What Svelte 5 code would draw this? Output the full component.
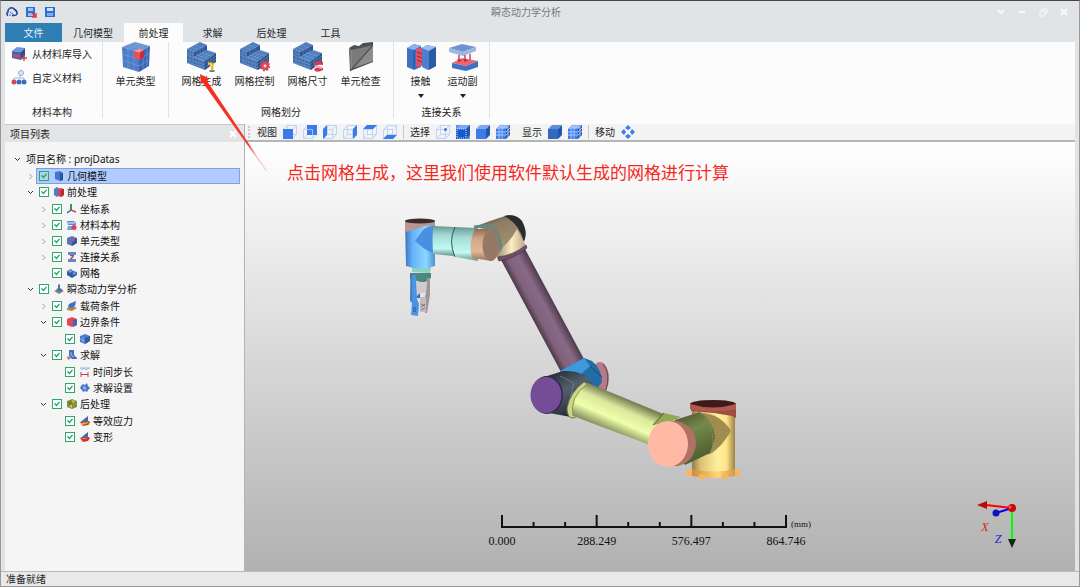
<script lang="ts">
  type TreeNode = {
    label: string;
    icon?: string;
    open?: boolean;
    folded?: boolean;
    children?: TreeNode[];
  };

  const tabs = ['几何模型', '前处理', '求解', '后处理', '工具'];
  const meshTools = [
    { label: '网格生成', icon: 'mesh-run' },
    { label: '网格控制', icon: 'mesh-control' },
    { label: '网格尺寸', icon: 'mesh-size' },
    { label: '单元检查', icon: 'check' },
  ];
  const linkTools = [
    { label: '接触', icon: 'contact' },
    { label: '运动副', icon: 'joint' },
  ];
  const toolbar = [
    {
      label: '视图',
      items: ['front', 'back', 'left', 'right', 'top', 'bottom'],
      split: true,
    },
    { label: '选择', items: ['point', 'edge', 'solid', 'grid'] },
    { label: '显示', items: ['shaded', 'meshed'], split: true },
    { label: '移动', items: ['move'] },
  ];

  const project: TreeNode = {
    label: '项目名称 : projDatas',
    open: true,
    children: [
      { label: '几何模型', icon: 'geometry', folded: true },
      {
        label: '前处理',
        icon: 'pre',
        open: true,
        children: [
          { label: '坐标系', icon: 'axes', folded: true },
          { label: '材料本构', icon: 'material', folded: true },
          { label: '单元类型', icon: 'element', folded: true },
          { label: '连接关系', icon: 'link', folded: true },
          { label: '网格', icon: 'mesh' },
        ],
      },
      {
        label: '瞬态动力学分析',
        icon: 'dynamic',
        open: true,
        children: [
          { label: '载荷条件', icon: 'load', folded: true },
          {
            label: '边界条件',
            icon: 'boundary',
            open: true,
            children: [{ label: '固定', icon: 'fixed' }],
          },
          {
            label: '求解',
            icon: 'solve',
            open: true,
            children: [
              { label: '时间步长', icon: 'step' },
              { label: '求解设置', icon: 'setting' },
            ],
          },
          {
            label: '后处理',
            icon: 'post',
            open: true,
            children: [
              { label: '等效应力', icon: 'stress' },
              { label: '变形', icon: 'deform' },
            ],
          },
        ],
      },
    ],
  };

  const ticks = Array.from({ length: 10 }, (_, i) => ({
    x: 502 + (i * 284) / 9,
    major: i % 3 === 0,
  }));
  const tickLabels = ['0.000', '288.249', '576.497', '864.746'];

  let activeTab = $state('前处理');
  let selected = $state('几何模型');
</script>

{#snippet meshBlock()}
  <path d="M0 7 7 10V15L18 19V28L0 21Z" fill="#3f6cab" />
  <path d="M0 7 13 0 20 3 7 10Z" fill="#4f7fbf" />
  <path d="M7 10 20 3V8L7 15Z" fill="#2d5490" />
  <path d="M7 15 20 8 29 11 18 19Z" fill="#4c7cbd" />
  <path d="M18 19 29 11V20L18 28Z" fill="#264b85" />
  <path
    d="M3 8V22M6 10V23M9 16V24M12 17V26M15 18V27M0 10 7 13M0 13 18 20M0 17 18 23M0 20 18 26M4 5 11 8M8 3 15 6M11 17 24 9M14 18 27 10M10 13 22 17M14 11 25 14M10 9V13M13 7V12M16 5V10M18 22 29 14M18 25 29 17M21 17V26M24 15V24M27 13V22"
    fill="none" stroke="#8db4e2" stroke-width=".5" opacity=".7"
  />
{/snippet}

{#snippet ribbonIcon(name: string)}
  <svg class="big-icon" viewBox="0 0 30 30" aria-hidden="true">
    {#if name.startsWith('mesh')}
      {@render meshBlock()}
      {#if name === 'mesh-run'}
        <ellipse cx="25" cy="29" rx="3" ry="1" fill="#666" />
        <path d="M21 20 27 21 26 28 24 29 24 24 21 23Z" fill="#e7b42b" />
        <path d="M23 21 25 24" stroke="#fff1a8" />
      {:else if name === 'mesh-control'}
        <circle cx="25" cy="24" r="4" fill="#e0495d" />
        <circle cx="25" cy="24" r="4.4" fill="none" stroke="#d93e53" stroke-width="1.6" stroke-dasharray="2 1.4" />
        <circle cx="25" cy="24" r="1.4" fill="#ffd6da" />
      {:else}
        <path d="M21 21Q25 18 30 20V23Q25 22 21 24ZM21 27Q25 24 30 26V28Q25 31 22 29Z" fill="#d83b50" />
        <path d="M22 24 29 26" stroke="#f6aab2" stroke-width="2" />
      {/if}
    {:else if name === 'cube'}
      <path d="M1 5 14 0 29 4 18 10Z" fill="#6790d0" />
      <path d="M1 5 18 10V30L2 25Z" fill="#4d7cc8" />
      <path d="M18 10 29 4 28 24 18 30Z" fill="#3a66b2" />
      <path
        d="M6 3 24 7M10 1 28 5M7 7 20 1M13 9 25 3M7 7V27M13 9V28M1 12 18 17 29 11M1 18 18 24 29 17M22 8V27M26 6V25"
        fill="none" stroke="#86a9e0" stroke-width=".5"
      />
      <path d="M13 9 18 7 23 8 18 11Z" fill="#ff9090" />
      <path d="M13 9 19 11V18L13 16Z" fill="#ef4b59" />
      <path d="M19 11 23 8V15L19 18Z" fill="#c32e43" />
    {:else if name === 'check'}
      <path d="M3 6 8 3 13 4 17 1 27 0V20L17 24 4 29Z" fill="#4f4f4f" />
      <path d="M5 8 15 6 27 3V19L16 23 5 27Z" fill="#7b7b7b" />
      <path d="M27 4V19L10 25Z" fill="#8c8c8c" />
      <path d="M27 3 4 29" stroke="#3c3c3c" />
      <path d="M3 6 5 9V27" fill="none" stroke="#999" />
    {:else if name === 'contact'}
      <path d="M1 6 8 2 15 4V25L8 28 1 25Z" fill="#3e71c1" />
      <path d="M1 6 8 2 15 4 8 8Z" fill="#8bb4ee" />
      <path d="M8 8V27" stroke="#274f93" />
      <path d="M10 7 19 5V23L10 25Z" fill="#e25065" />
      <path d="M11 10 16 12M11 14 16 16M11 18 16 20" stroke="#8e2845" />
      <path d="M16 6 21 3 30 5V24L22 28 16 25Z" fill="#4c7fcd" />
      <path d="M16 6 21 3 30 5 23 9Z" fill="#9abdf0" />
      <path d="M23 9 30 5V24L23 28Z" fill="#2c5aa5" />
    {:else}
      <path d="M1 6 14 2 28 5 15 10Z" fill="#7094d2" />
      <path d="M1 6 15 10V14L1 10ZM15 10 28 5V9L15 14Z" fill="#9cb6dd" />
      <path d="M4 21 14 16 30 19 18 24Z" fill="#f1626c" />
      <path d="M4 21 18 24V29L4 26ZM18 24 30 19V25L18 29Z" fill="#3d71c3" />
      <path d="M11 13V18M17 13V19M22 12V18" stroke="#c34658" stroke-width="1.5" />
      <path d="M9 17 14 18 11 20ZM15 17 20 18 17 20Z" fill="#b92a3e" />
    {/if}
  </svg>
{/snippet}

{#snippet viewIcon(name: string)}
  <svg width="14" height="14" viewBox="0 0 14 14" aria-hidden="true">
    {#if name === 'move'}
      <path d="M7 0 10 3 7 5 4 3ZM7 14 10 11 7 9 4 11ZM0 7 3 4 5 7 3 10ZM14 7 11 4 9 7 11 10Z" fill="#3c7dea" />
    {:else if ['edge', 'solid', 'grid', 'shaded', 'meshed'].includes(name)}
      {#if name === 'edge'}
        <path d="M0 0H14V14H0Z" fill="#5a94f0" />
      {/if}
      <path d="M0 4 4 0H14L10 4Z" fill={name === 'shaded' ? '#5b8ede' : '#79a8f5'} />
      <path d="M0 4H10V14H0Z" fill={name === 'shaded' ? '#3469c0' : name === 'edge' ? '#155bd0' : '#3b7ce9'} />
      <path d="M10 4 14 0V10L10 14Z" fill="#2456ad" />
      {#if name === 'edge'}
        <path d="M1 4H10V13H1Z" fill="none" stroke="#cfe0ff" stroke-dasharray="1 1" />
      {:else if name === 'grid' || name === 'meshed'}
        <path d="M0 7H10L14 3M0 10H10L14 6M3 4V14M6 4V14M3 4 7 0M6 4 10 0M2 2H12M12 2V12" fill="none" stroke="#c3d9ff" stroke-width=".8" />
      {/if}
    {:else}
      <path d="M.5 4.5H9.5V13.5H.5ZM4.5.5H13.5V9.5H4.5ZM.5 4.5 4.5.5M9.5 4.5 13.5.5M.5 13.5 4.5 9.5M9.5 13.5 13.5 9.5" fill="none" stroke="#bcd5fb" />
      {#if name === 'front'}
        <path d="M0 4H10V14H0Z" fill="#3a7be9" />
      {:else if name === 'back'}
        <path d="M4 0H14V10H4Z" fill="#3a7be9" />
        <path d="M4 4.5H9.5V10" fill="none" stroke="#9dc1fa" />
      {:else if name === 'left'}
        <path d="M0 4 4 0V10L0 14Z" fill="#3a7be9" />
      {:else if name === 'right'}
        <path d="M10 4 14 0V10L10 14Z" fill="#3a7be9" />
      {:else if name === 'top'}
        <path d="M0 4 4 0H14L10 4Z" fill="#3a7be9" />
      {:else if name === 'bottom'}
        <path d="M0 14 4 10H14L10 14Z" fill="#3a7be9" />
      {:else}
        <circle cx="9.5" cy="4.5" r="1.6" fill="#3a7be9" />
      {/if}
    {/if}
  </svg>
{/snippet}

{#snippet treeIcon(name: string)}
  <svg class="node-icon" viewBox="0 0 10 10" aria-hidden="true">
    {#if name === 'geometry'}
      <path d="M1 1 6 0 9 2V9L6 10 1 8Z" fill="#3d79cf" />
      <path d="M6 2 9 2V9L6 10Z" fill="#285599" />
    {:else if name === 'pre'}
      <path d="M0 2 3 0 6 2V8L3 10 0 8Z" fill="#4f7fc6" />
      <path d="M4 2 7 1 10 2V8L7 10 4 9Z" fill="#d9404f" />
      <path d="M7 3 10 2V8L7 10Z" fill="#a82c40" />
    {:else if name === 'axes'}
      <path d="M4 6 9 8" stroke="#c94a55" stroke-width="1.5" />
      <path d="M4 0V6" stroke="#2f9a57" stroke-width="2" />
      <path d="M4 6 0 9" stroke="#3562b5" stroke-width="1.5" />
    {:else if name === 'material'}
      <path d="M0 1H7L9 3V5H1Z" fill="#5a8ad2" />
      <path d="M1 3H8" stroke="#e8efff" />
      <path d="M1 6H5V10H0Z" fill="#7da0dc" />
      <circle cx="7" cy="7.5" r="2.5" fill="#dc3f55" />
    {:else if name === 'element' || name === 'fixed'}
      <path d="M0 2 5 0 10 2V7L5 10 0 8Z" fill="#4b7ccb" />
      <path d="M5 4 10 2V7L5 10Z" fill="#3059a5" />
      {#if name === 'element'}
        <path d="M4 3 7 2 8 4 6 6 4 5Z" fill="#e14455" />
      {:else}
        <path d="M3 3V8M0 5 5 7" stroke="#a5c3f0" stroke-width=".6" />
      {/if}
    {:else if name === 'link'}
      <path d="M1 0H9V3H1ZM1 7H9V10H1Z" fill="#6289c9" />
      <path d="M3 3H7V4L5 7H3L5 4H3Z" fill="#d23e50" />
    {:else if name === 'mesh'}
      <path d="M0 3 4 1 6 3 10 4V7L5 10 0 7Z" fill="#2f5c9f" />
      <path d="M0 3 4 1 6 3 3 5ZM5 5 8 4 10 5 7 7Z" fill="#6f9bd6" />
    {:else if name === 'dynamic'}
      <path d="M0 7 5 5 10 7 5 10Z" fill="#8f8567" />
      <path d="M4 1 6 0V4L9 6 6 8 2 6 4 4Z" fill="#4672b8" />
    {:else if name === 'load'}
      <path d="M0 7 6 5 10 7 5 10 0 9Z" fill="#b0894a" />
      <path d="M2 3 9 0 8 5 4 7 1 6Z" fill="#3c70c2" />
    {:else if name === 'boundary'}
      <path d="M0 2 5 0 10 2V8L5 10 0 8Z" fill="#e44654" />
      <path d="M6 3 10 2V8L6 10Z" fill="#3c68b6" />
    {:else if name === 'solve'}
      <path d="M2 0H7V5L10 8V9H5L2 6Z" fill="#3f6fbe" />
      <path d="M0 6 4 8 1 10Z" fill="#cc5568" />
      <path d="M4 2V5L7 7" fill="none" stroke="#a6c1ea" />
    {:else if name === 'step'}
      <path d="M0 1H10M1 3 4 1 6 3 9 1" fill="none" stroke="#86a7dc" stroke-width=".8" />
      <path d="M1 5V10M1 7.5H8M8 5V10" fill="none" stroke="#cf3f4f" />
    {:else if name === 'setting'}
      <path d="M1 3 3 1 5 2 7 0 8 3 10 5 8 7 7 9 5 8 3 9 2 7 0 5Z" fill="#4777c5" />
      <path d="M3 3 6 4V7L3 6Z" fill="#8db2ea" />
    {:else if name === 'post'}
      <path d="M0 2 5 0 10 2V8L5 10 0 8Z" fill="#5da443" />
      <circle cx="3" cy="4" r="1.5" fill="#df3b2d" />
      <circle cx="7" cy="6" r="1.8" fill="#e56a2c" />
      <path d="M2 7 5 6 5 9ZM5 1 8 2 6 4Z" fill="#f0c93b" />
    {:else}
      <path d="M0 6 7 4 10 6 8 9 3 10Z" fill="#d2302e" />
      <path d="M3 4 8 0V4L5 6 1 6Z" fill="#3e69ae" />
      {#if name === 'stress'}
        <path d="M1 7 8 6V7L3 9Z" fill="#efb23a" />
        <path d="M7 7 10 6 9 9Z" fill="#4fa34d" />
      {:else}
        <path d="M1 6 8 6 4 7Z" fill="#f2a53c" />
      {/if}
    {/if}
  </svg>
{/snippet}

{#snippet treeNode(node: TreeNode)}
  <li>
    <div class="row">
      <span class="twist">
        {#if node.open || node.folded}
          <button type="button" aria-label={`展开 ${node.label}`} aria-expanded={!!node.open}>
            <svg width="7" height="7" viewBox="0 0 7 7" aria-hidden="true">
              <path
                d={node.open ? 'M1 2 3.5 4.500 6 2' : 'M2.5 1 5 3.500 2.500 6'}
                fill="none" stroke={node.open ? '#333' : '#999'}
              />
            </svg>
          </button>
        {/if}
      </span>
      {#if node.icon}
        <div class="item" class:selected={selected === node.label}>
          <input type="checkbox" id={`node-${node.icon}`} checked />
          <label for={`node-${node.icon}`}>
            {@render treeIcon(node.icon)}
            {node.label}
          </label>
        </div>
      {:else}
        <span class="root-label">{node.label}</span>
      {/if}
    </div>
    {#if node.children}
      <ul>
        {#each node.children as child (child.label)}
          {@render treeNode(child)}
        {/each}
      </ul>
    {/if}
  </li>
{/snippet}

<div class="window">
  <header class="titlebar">
    <div class="quick">
      <button type="button" aria-label="云端">
        <svg width="12" height="12" viewBox="0 0 12 12" aria-hidden="true">
          <path d="M2 9.500A2 2 0 0 1 2 6 3.500 3.500 0 0 1 8 3Q11.500 5 11 8 10 10 6 9.500" fill="none" stroke="#22379a" stroke-width="1.500" />
          <path d="M1 6Q2 2 6 2" fill="none" stroke="#4c8ae0" stroke-dasharray="2 1" />
          <path d="M4 6 8 9M5 9H3" stroke="#3b6fd2" />
        </svg>
      </button>
      <button type="button" aria-label="另存为">
        <svg width="12" height="12" viewBox="0 0 12 12" aria-hidden="true">
          <path d="M1 1H10V11H1Z" fill="#2d6fd6" />
          <path d="M3 2H8V5H3ZM3 7H8V10H3Z" fill="#9cc1f5" />
          <path d="M6 6 10 10M11 7V11H7" fill="none" stroke="#e03b45" stroke-width="1.500" />
        </svg>
      </button>
      <button type="button" aria-label="保存">
        <svg width="12" height="12" viewBox="0 0 12 12" aria-hidden="true">
          <path d="M1 1H11V11H1Z" fill="#2d6fd6" />
          <path d="M3 2H9V5H3Z" fill="#cfe1fb" />
          <path d="M3 7H9V10H3Z" fill="#7eacf0" />
        </svg>
      </button>
    </div>
    <h1>瞬态动力学分析</h1>
    <div class="controls">
      <button type="button" aria-label="功能区">
        <svg width="10" height="10" viewBox="0 0 10 10"><path d="M2 3 5 6 8 3" /></svg>
      </button>
      <button type="button" aria-label="最小化">
        <svg width="10" height="10" viewBox="0 0 10 10"><path d="M2 5H8" /></svg>
      </button>
      <button type="button" aria-label="还原">
        <svg class="thin" width="10" height="10" viewBox="0 0 10 10"><path d="M2 4H7V9H2ZM4 4V2H9V6H7" /></svg>
      </button>
      <button type="button" aria-label="关闭">
        <svg width="10" height="10" viewBox="0 0 10 10"><path d="M2 2 8 8M8 2 2 8" /></svg>
      </button>
    </div>
  </header>

  <nav class="tabs">
    <button type="button" class="file">文件</button>
    {#each tabs as tab (tab)}
      <button type="button" class:active={activeTab === tab} onclick={() => (activeTab = tab)}>{tab}</button>
    {/each}
  </nav>

  <section class="ribbon">
    <div class="group material">
      <div class="stack">
        <button type="button" class="line-btn">
          <svg width="16" height="16" viewBox="0 0 16 16" aria-hidden="true">
            <path d="M1 5 6 1 14 2 10 6Z" fill="#6b98de" />
            <path d="M1 5 10 6V14L1 12Z" fill="#3969b8" />
            <path d="M10 6 14 2V10L10 14Z" fill="#284e91" />
            <path d="M2 8 9 9V12L2 11Z" fill="#d4475b" />
            <path d="M13 9V15M10 12H16" stroke="#e03d4c" stroke-width="1.500" />
          </svg>
          从材料库导入
        </button>
        <button type="button" class="line-btn">
          <svg width="16" height="16" viewBox="0 0 16 16" aria-hidden="true">
            <path d="M9 4V8M3 12V8H13V12" fill="none" stroke="#a3b8da" />
            <circle cx="10" cy="3" r="2.500" fill="#d9e6fa" stroke="#8daee0" />
            <circle cx="3" cy="12" r="2.500" fill="#d2475a" />
            <circle cx="8" cy="12" r="2.500" fill="#3c6dc0" />
            <circle cx="13" cy="12" r="2.500" fill="#3c6dc0" />
          </svg>
          自定义材料
        </button>
      </div>
      <div class="caption">材料本构</div>
    </div>

    <div class="group element">
      <div class="tools">
        <button type="button" class="tool">
          {@render ribbonIcon('cube')}
          <span>单元类型</span>
        </button>
      </div>
    </div>

    <div class="group mesh">
      <div class="tools">
        {#each meshTools as tool (tool.icon)}
          <button type="button" class="tool">
            {@render ribbonIcon(tool.icon)}
            <span>{tool.label}</span>
          </button>
        {/each}
      </div>
      <div class="caption">网格划分</div>
    </div>

    <div class="group link">
      <div class="tools">
        {#each linkTools as tool (tool.icon)}
          <button type="button" class="tool narrow">
            {@render ribbonIcon(tool.icon)}
            <span>{tool.label}</span>
            <i class="drop"></i>
          </button>
        {/each}
      </div>
      <div class="caption">连接关系</div>
    </div>
  </section>

  <main>
    <aside>
      <div class="dock-head">
        <h2>项目列表</h2>
        <button type="button" aria-label="关闭面板">
          <svg width="10" height="10" viewBox="0 0 10 10"><path d="M2 2 8 8M8 2 2 8" stroke="#fff" stroke-width="2" /></svg>
        </button>
      </div>
      <ul class="tree">
        {@render treeNode(project)}
      </ul>
    </aside>

    <div class="work">
      <div class="viewbar">
        <span class="grip"></span>
        {#each toolbar as section (section.label)}
          <div class="view-section" class:split={section.split}>
            <span>{section.label}</span>
            {#each section.items as item (item)}
              <button type="button" aria-label={`${section.label} ${item}`}>{@render viewIcon(item)}</button>
            {/each}
          </div>
        {/each}
      </div>

      <div class="viewport">
        <svg class="scene" viewBox="245 142 830 429" role="img" aria-label="机械臂模型">
          <defs>
            <linearGradient id="wrist"><stop offset="0" stop-color="#3c74bd" /><stop offset=".25" stop-color="#65b2fb" /><stop offset=".7" stop-color="#8cd8ff" /><stop offset="1" stop-color="#4c93cb" /></linearGradient>
            <linearGradient id="aqua" x2="0" y2="1"><stop offset="0" stop-color="#699895" /><stop offset=".3" stop-color="#a3dad5" /><stop offset=".75" stop-color="#c2faf3" /><stop offset="1" stop-color="#68928e" /></linearGradient>
            <linearGradient id="tan" x2="0" y2="1"><stop offset="0" stop-color="#8e6c56" /><stop offset=".3" stop-color="#d3a688" /><stop offset=".7" stop-color="#e3b797" /><stop offset="1" stop-color="#95735b" /></linearGradient>
            <linearGradient id="elbow" x2=".4" y2="1"><stop offset="0" stop-color="#30302b" /><stop offset=".3" stop-color="#8d7c61" /><stop offset="1" stop-color="#ab9877" /></linearGradient>
            <linearGradient id="cream"><stop offset="0" stop-color="#9d8f72" /><stop offset=".5" stop-color="#ffebc3" /><stop offset="1" stop-color="#b7a684" /></linearGradient>
            <linearGradient id="upper" gradientUnits="userSpaceOnUse" x1="529" y1="317" x2="555" y2="303"><stop offset="0" stop-color="#3b2b38" /><stop offset=".3" stop-color="#80627c" /><stop offset=".65" stop-color="#896a85" /><stop offset="1" stop-color="#49364a" /></linearGradient>
            <linearGradient id="fore" gradientUnits="userSpaceOnUse" x1="625" y1="399" x2="611" y2="431"><stop offset="0" stop-color="#788153" /><stop offset=".3" stop-color="#dce89c" /><stop offset=".65" stop-color="#efffab" /><stop offset="1" stop-color="#899462" /></linearGradient>
            <linearGradient id="olive" x2=".4" y2="1"><stop offset="0" stop-color="#3e4b27" /><stop offset=".45" stop-color="#75894a" /><stop offset="1" stop-color="#4d5e32" /></linearGradient>
            <linearGradient id="base"><stop offset="0" stop-color="#907d4a" /><stop offset=".2" stop-color="#dcc176" /><stop offset=".6" stop-color="#fff09c" /><stop offset=".8" stop-color="#ffe487" /><stop offset="1" stop-color="#9b8247" /></linearGradient>
            <linearGradient id="foot"><stop offset="0" stop-color="#d18b38" /><stop offset=".6" stop-color="#ffd77a" /><stop offset="1" stop-color="#d9964a" /></linearGradient>
            <linearGradient id="slate" x2=".5" y2="1"><stop offset="0" stop-color="#1c2127" /><stop offset=".5" stop-color="#52606e" /><stop offset="1" stop-color="#232a32" /></linearGradient>
          </defs>

          <!-- gripper -->
          <path d="M412 267H431L430 273 412 272Z" fill="#8ed1c2" />
          <path d="M410 273H431V278L424 283 410 279Z" fill="#4c887d" />
          <path d="M417 282H426V293H420L417 296Z" fill="#d3cace" />
          <path d="M427 278H430V295L427 313H425V296L426 293Z" fill="#9e969c" />
          <path d="M420 297H426V312H420Z" fill="#c4bdc0" />
          <path d="M421 304 425 306M421 310 425 308M425 304 421 307" stroke="#7d787b" />
          <path d="M411 275H416L417 299 419 304 418 316 411 315 412 303 410 301Z" fill="#4a94e3" />
          <path d="M411 275V300" stroke="#2f69ad" />
          <path d="M413 307H416V312H413Z" fill="#3674bd" />
          <path d="M417 296 420 293V298H417Z" fill="#356fb6" />

          <!-- wrist -->
          <path d="M405 221H435V266Q420 271 406 266Z" fill="url(#wrist)" />
          <path d="M405 221V232Q418 229 424 226L435 225V221Z" fill="#b99692" />
          <ellipse cx="420" cy="221" rx="15" ry="2.500" fill="#3c2b2b" />
          <path d="M415 241 423 230Q427 226 435 226V254Q425 250 421 246Z" fill="#4b90df" />
          <path d="M433 226 454 227V256L433 254Q432 240 433 226Z" fill="url(#aqua)" />
          <path d="M454 227 478 228V261L456 257Q448 242 454 227Z" fill="url(#aqua)" />
          <path d="M455 227Q448 241 455 257" fill="none" stroke="#315b59" />

          <!-- elbow -->
          <path d="M474 227 490 221 508 215Q524 216 526 235L520 249 498 261 490 230Z" fill="url(#elbow)" />
          <path d="M504 216Q516 213 522 221 528 232 524 242 519 223 504 216Z" fill="#292d2d" />
          <path d="M474 227 490 225Q501 232 501 253" fill="none" stroke="#618984" stroke-width="3" />
          <path d="M517 229Q512 239 503 247L497 258Q512 257 526 246Z" fill="url(#cream)" />
          <path d="M475 229 492 229V261L472 258Q468 243 475 229Z" fill="url(#tan)" />
          <ellipse cx="491" cy="245" rx="8.500" ry="16" fill="#957966" />

          <!-- upper arm -->
          <path d="M501 260 525 249 584 359Q577 368 561 372Z" fill="url(#upper)" />
          <path d="M498 257Q514 255 526 245L527 248Q514 259 499 261Z" fill="#6d5068" stroke="#432f42" stroke-width=".6" />

          <!-- middle joint -->
          <ellipse cx="600" cy="378" rx="9" ry="16" fill="#b47c89" />
          <path d="M603 364Q611 373 606 390" fill="none" stroke="#654149" />
          <path d="M560 371 584 358 592 361Q602 369 602 382L594 393 572 384Z" fill="#236ca6" />
          <path d="M560 371 584 358 590 366 579 376Z" fill="#3f97dc" />
          <path d="M590 366 602 377" stroke="#174a76" />
          <path d="M544 377 563 371Q584 370 592 383L586 398 571 417 549 413Z" fill="url(#slate)" />
          <path d="M560 376 574 383 567 411" fill="none" stroke="#6c7986" />
          <ellipse cx="547" cy="395" rx="16" ry="19" fill="#38234b" />
          <ellipse cx="546" cy="395" rx="15.500" ry="18" fill="#744d96" />

          <!-- forearm -->
          <path d="M584 382Q570 392 567 408 567 419 574 418L580 414 588 384Z" fill="#cad883" stroke="#6e7845" />
          <path d="M588 383 666 415 650 445 573 416Q569 397 588 383Z" fill="url(#fore)" />
          <path d="M573 416Q569 397 588 383" fill="none" stroke="#8a955a" />

          <!-- base -->
          <path d="M692 408H735V474Q713 480 692 474Z" fill="url(#base)" />
          <path d="M691 407H736V418L732 416 714 413 691 411Z" fill="#a04d45" />
          <ellipse cx="713" cy="404" rx="23" ry="4" fill="#3d1b1b" />
          <path d="M690 404V409Q713 414 736 409V404Q713 411 690 404Z" fill="#b15a51" />
          <path d="M692 469Q713 474 735 469V476Q713 480 692 476Z" fill="url(#foot)" />
          <path d="M686 470H692V476H686ZM699 474H705V479H699ZM722 474H728V479H722ZM735 470H740V476H735Z" fill="#f6b65b" />

          <!-- shoulder -->
          <path d="M653 425 664 413 681 417 667 423Z" fill="#93a852" />
          <path d="M653 425 664 413" stroke="#505f2e" />
          <path d="M700 413Q720 413 731 431 721 448 710 454L700 455Z" fill="#9f8d50" />
          <path d="M675 420 700 412Q714 421 715 438L710 453 685 465 671 446Z" fill="url(#olive)" />
          <path d="M700 413Q716 425 712 453" fill="none" stroke="#8d8c50" stroke-dasharray="2 1" />
          <path d="M668 421H678Q696 427 696 444 694 462 678 466H668Z" fill="#af7265" />
          <ellipse cx="668" cy="444" rx="20" ry="23" fill="#ffb9a5" />

          <g class="ruler">
            <path d="M501 527H787" />
            {#each ticks as tick (tick.x)}
              <path d={`M${tick.x} ${tick.major ? 515 : 522}V528`} />
            {/each}
            {#each tickLabels as value, i (value)}
              <text x={502 + (i * 284) / 3} y="545">{value}</text>
            {/each}
            <text class="unit" x="801" y="527">(mm)</text>
          </g>

          <g class="triad">
            <path d="M1012 508 986 505" stroke="#f00" stroke-width="2" />
            <path d="M977 505 987 501 987 509Z" fill="#b80c0c" />
            <path d="M1012 508 996 513" stroke="#00f" stroke-width="2" />
            <circle cx="996" cy="513" r="3.500" fill="#0c14b8" />
            <path d="M1012 508V540" stroke="#0f0" stroke-width="2" />
            <path d="M1008 539H1016L1012 548Z" fill="#0a2b0a" />
            <circle cx="1012" cy="508" r="4" fill="#c80c0c" />
            <circle cx="1010" cy="507" r="1.500" fill="#ff5a4a" />
            <text x="985" y="531" fill="#e02020">X</text>
            <text x="998" y="543" fill="#2020d0">Z</text>
          </g>
        </svg>
        <p class="note">点击网格生成，这里我们使用软件默认生成的网格进行计算</p>
      </div>
    </div>
  </main>

  <footer>准备就绪</footer>

  <svg class="pointer" width="80" height="110" viewBox="195 70 80 110" aria-hidden="true">
    <defs>
      <linearGradient id="pointer-fade" x2=".6" y2="1">
        <stop offset="0" stop-color="#fa2a1a" />
        <stop offset=".85" stop-color="#f03a2c" />
        <stop offset="1" stop-color="#f03a2c" stop-opacity=".3" />
      </linearGradient>
    </defs>
    <path d="M200 74 209 79 207 81 267 171 266 171 203 83 201 84Z" fill="url(#pointer-fade)" />
  </svg>
</div>

<style>
  :global(body) {
    margin: 0;
  }
  .window {
    position: relative;
    display: flex;
    flex-direction: column;
    min-height: 100vh;
    box-sizing: border-box;
    border: 1px solid #999;
    border-top-color: #454549;
    background: #e1e4e7;
    color: #262626;
    font: 10px/16px 'Noto Sans CJK SC', sans-serif;
  }
  button {
    padding: 0;
    border: 0;
    background: none;
    color: inherit;
    font: inherit;
  }
  svg {
    display: block;
    flex: none;
  }
  h1,
  h2,
  p,
  ul {
    margin: 0;
    padding: 0;
    font-size: inherit;
    font-weight: 400;
    list-style: none;
  }

  /* title bar */
  .titlebar {
    display: flex;
    align-items: center;
    height: 22px;
    padding: 0 10px 0 5px;
  }
  .quick {
    display: flex;
    gap: 7px;
  }
  h1 {
    flex: 1;
    text-align: center;
    color: #777;
  }
  .controls {
    display: flex;
    gap: 11px;
  }
  .controls path {
    fill: none;
    stroke: #f8f9fa;
    stroke-width: 2;
  }
  .controls .thin path {
    stroke-width: 1;
  }

  /* tabs */
  .tabs {
    display: flex;
    height: 19px;
    padding: 0 4px;
  }
  .tabs button {
    min-width: 59px;
    padding: 0 11px;
  }
  .tabs .file {
    min-width: 57px;
    background: #2f7fb5;
    color: #e6f2fa;
  }
  .tabs .active {
    background: #fcfcfc;
  }

  /* ribbon */
  .ribbon {
    display: flex;
    height: 76px;
    margin: 0 4px;
    padding-bottom: 6px;
    background: #fcfcfc;
  }
  .group {
    display: flex;
    flex-direction: column;
    align-items: center;
    box-sizing: border-box;
    border-right: 1px solid #e2e2e2;
  }
  .material {
    width: 98px;
    padding-right: 3px;
  }
  .element {
    width: 66px;
  }
  .mesh {
    width: 225px;
  }
  .link {
    width: 96px;
  }
  .stack {
    display: flex;
    flex-direction: column;
    align-self: flex-start;
    gap: 8px;
    padding: 4px 0 0 6px;
  }
  .line-btn {
    display: flex;
    align-items: center;
    gap: 5px;
    height: 16px;
    white-space: nowrap;
  }
  .tools {
    display: flex;
  }
  .tool {
    display: flex;
    flex-direction: column;
    align-items: center;
    width: 53px;
    line-height: 18px;
  }
  .tool.narrow {
    width: 42px;
  }
  .big-icon {
    width: 30px;
    height: 30px;
  }
  .drop {
    margin-top: 4px;
    border: 3px solid transparent;
    border-top: 4px solid #222;
    border-bottom: 0;
  }
  .caption {
    margin-top: auto;
    line-height: 12px;
  }

  main {
    display: flex;
    flex: 1;
    margin: 0 4px;
  }

  /* project tree */
  aside {
    width: 239px;
    flex: none;
    border-right: 1px solid #b4b4b6;
    background: #f5f5f5;
  }
  .dock-head {
    display: flex;
    align-items: center;
    justify-content: space-between;
    height: 17px;
    padding: 0 6px 0 5px;
    border-top: 1px solid #c6c8ca;
    background: #e2e4e6;
  }
  .tree {
    padding: 9px 4px 0 7px;
  }
  .tree ul {
    padding-top: 1px;
  }
  /* :global keeps the rule for lists rendered through the recursive snippet */
  .tree :global(ul) {
    padding-left: 13px;
  }
  .row {
    display: flex;
    align-items: center;
    height: 16px;
    color: #111;
  }
  .twist {
    display: flex;
    justify-content: center;
    width: 11px;
    flex: none;
  }
  .root-label {
    padding-left: 3px;
    font-family: 'Noto Sans', 'Noto Sans CJK SC', sans-serif;
  }
  .item {
    display: flex;
    align-items: center;
    flex: 1;
    gap: 5px;
    height: 14px;
    padding-left: 2px;
    border: 1px solid transparent;
  }
  .item.selected {
    border-color: #7ba0e6;
    background: #b0cbff;
  }
  .item label {
    display: flex;
    align-items: center;
    gap: 3px;
    line-height: 14px;
  }
  .item input {
    display: grid;
    box-sizing: border-box;
    width: 10px;
    height: 10px;
    margin: 0;
    border: 1px solid #2fa56f;
    appearance: none;
    background: #fff;
  }
  .item.selected input {
    background: #a9d8e6;
  }
  .item input:checked::before {
    content: '';
    width: 6px;
    height: 6px;
    margin: 1px;
    background: #1d9c62;
    clip-path: polygon(0 45%, 18% 32%, 40% 58%, 85% 8%, 100% 22%, 42% 90%);
  }
  .node-icon {
    width: 10px;
    height: 10px;
  }

  /* work area */
  .work {
    display: flex;
    flex: 1;
    flex-direction: column;
    min-width: 0;
  }
  .viewbar {
    display: flex;
    align-items: center;
    height: 16px;
    border-bottom: 2px solid #b5b5b5;
    background: #f3f3f3;
  }
  .grip {
    width: 2px;
    height: 12px;
    margin: 0 7px 0 3px;
    border-left: 2px dotted #ccc;
    box-sizing: border-box;
  }
  .view-section {
    display: flex;
    align-items: center;
    gap: 6px;
    padding-right: 12px;
  }
  .view-section.split {
    margin-right: 6px;
    padding-right: 6px;
    border-right: 1px solid #c9c9c9;
    line-height: 14px;
  }
  .viewport {
    position: relative;
    flex: 1;
    background: linear-gradient(#fff, #b1b1b1);
  }
  .scene {
    position: absolute;
    inset: 0;
    width: 100%;
    height: 100%;
  }
  .ruler path {
    stroke: #111;
    stroke-width: 2;
  }
  .ruler text {
    font: 12px 'Liberation Serif', serif;
    text-anchor: middle;
    fill: #111;
  }
  .ruler .unit {
    font-size: 9px;
  }
  .triad text {
    font: italic 12px 'Liberation Serif', serif;
    text-anchor: middle;
  }
  .note {
    position: relative;
    padding: 18px 0 0 42px;
    color: #f5281c;
    font-size: 17px;
    line-height: 24px;
  }

  footer {
    height: 14px;
    padding-left: 5px;
    border-top: 1px solid #b9b9bb;
    background: #e9e9e9;
    line-height: 14px;
  }

  /* callout arrow lies over ribbon, panel and canvas */
  .pointer {
    position: absolute;
    top: 69px;
    left: 194px;
    pointer-events: none;
  }
</style>
